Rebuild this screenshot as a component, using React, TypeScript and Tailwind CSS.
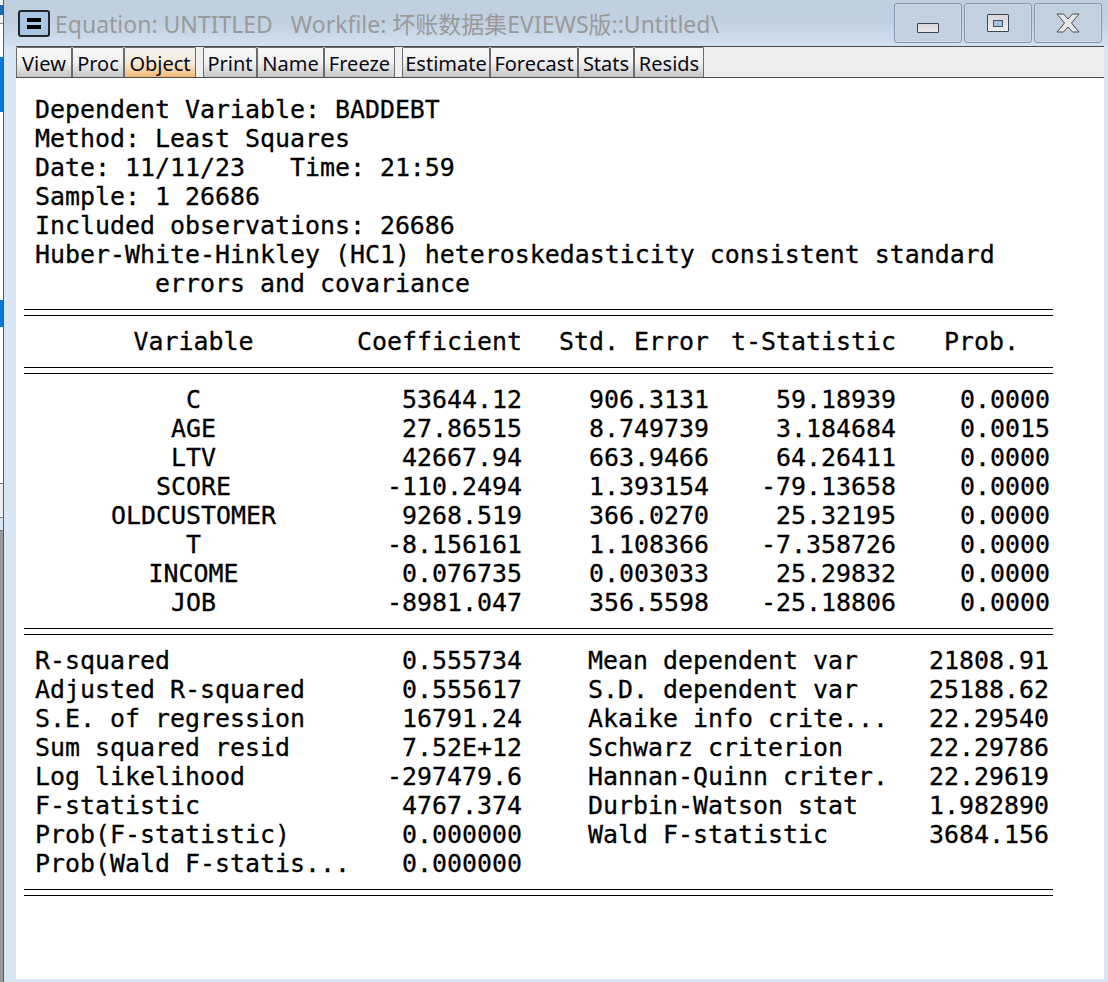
import React from 'react';

const coefRows = [
  ['C', '53644.12', '906.3131', '59.18939', '0.0000'],
  ['AGE', '27.86515', '8.749739', '3.184684', '0.0015'],
  ['LTV', '42667.94', '663.9466', '64.26411', '0.0000'],
  ['SCORE', '-110.2494', '1.393154', '-79.13658', '0.0000'],
  ['OLDCUSTOMER', '9268.519', '366.0270', '25.32195', '0.0000'],
  ['T', '-8.156161', '1.108366', '-7.358726', '0.0000'],
  ['INCOME', '0.076735', '0.003033', '25.29832', '0.0000'],
  ['JOB', '-8981.047', '356.5598', '-25.18806', '0.0000'],
];

const statRows = [
  ['R-squared', '0.555734', 'Mean dependent var', '21808.91'],
  ['Adjusted R-squared', '0.555617', 'S.D. dependent var', '25188.62'],
  ['S.E. of regression', '16791.24', 'Akaike info crite...', '22.29540'],
  ['Sum squared resid', '7.52E+12', 'Schwarz criterion', '22.29786'],
  ['Log likelihood', '-297479.6', 'Hannan-Quinn criter.', '22.29619'],
  ['F-statistic', '4767.374', 'Durbin-Watson stat', '1.982890'],
  ['Prob(F-statistic)', '0.000000', 'Wald F-statistic', '3684.156'],
  ['Prob(Wald F-statis...', '0.000000', '', ''],
];

const toolGroups = [
  [['View', 'w-[56px]'], ['Proc', 'w-[52px]'], ['Object', 'w-[72px]']],
  [['Print', 'w-[54px]'], ['Name', 'w-[67px]'], ['Freeze', 'w-[71px]']],
  [['Estimate', 'w-[88px]'], ['Forecast', 'w-[88px]'], ['Stats', 'w-[56px]'], ['Resids', 'w-[70px]']],
];

function DoubleRule() {
  return <div className="h-[7px] w-[1029px] border-y border-black" />;
}

function ToolButton({ label, width }: { label: string; width: string }) {
  const active = label === 'Object';
  return (
    <div
      className={`${width} flex h-[30px] items-center justify-center rounded-t-[2px] border border-[#6b6b6b] border-b-0 pt-[2px] font-['Noto_Sans',sans-serif] text-[20px] text-[#0a0a14] ${
        active
          ? 'bg-gradient-to-b from-[#f4f2ef] via-[#f6ead8] to-[#f3b873]'
          : 'bg-gradient-to-b from-[#f8f8f8] via-[#f1f1f1] to-[#c6c6c6]'
      }`}
    >
      {label}
    </div>
  );
}

function CaptionButton({ children }: { children: React.ReactNode }) {
  return (
    <div className="flex h-[40px] w-[68px] items-center justify-center rounded-[3px] border border-[#8496b3] bg-[#c2d0e0] shadow-[inset_0_0_0_1px_#cddaea]">
      {children}
    </div>
  );
}

// slice of whatever sits behind the window on the left edge
function BehindStrip() {
  return (
    <div className="flex w-[3px] shrink-0 flex-col bg-white">
      <div className="h-[23px] bg-[#f0f0f0] pt-[5px]">
        <div className="h-[10px] bg-[#1a6bb0]" />
      </div>
      <div className="h-px bg-[#8a8a8a]" />
      <div className="h-[33px]" />
      <div className="h-[55px] bg-[#0a78d7]" />
      <div className="h-[188px]" />
      <div className="h-[27px] bg-[#0a78d7]" />
      <div className="h-[156px]" />
      <div className="h-px bg-[#777777]" />
      <div className="h-[33px] bg-[#eeeeee]" />
      <div className="h-px bg-[#777777]" />
      <div className="h-[12px] bg-[#d5e6f3]" />
      <div className="h-px bg-[#777777]" />
      <div className="flex-1 bg-[#9a9a9a]" />
    </div>
  );
}

export default function App() {
  return (
    <div className="flex h-[982px] w-[1108px] overflow-hidden bg-[#d9e6f3] font-['Liberation_Sans','Noto_Sans_CJK_SC',sans-serif]">
      <BehindStrip />
      <div className="w-px shrink-0 bg-[#5a5a5a]" />
      <div className="flex min-w-0 flex-1 flex-col">
        <div className="flex h-[46px] items-start bg-gradient-to-b from-[#bfcfdf] via-[#c2d1e1] to-[#d3e1f0] pl-[14px] pr-[6px]">
          <div className="mt-[10px] flex h-[27px] w-[32px] shrink-0 flex-col items-center justify-center gap-[3px] rounded-[3px] border-2 border-[#23262c] bg-[#a9c5e4]">
            <div className="h-[4px] w-[14px] bg-black" />
            <div className="h-[4px] w-[14px] bg-black" />
          </div>
          <div className="ml-[5px] mt-[7px] flex-1 whitespace-pre font-['Noto_Sans','Noto_Sans_CJK_SC',sans-serif] text-[23px] leading-[34px] text-[#9a9a9a]">
            {'Equation: UNTITLED   Workfile: 坏账数据集EVIEWS版::Untitled\\'}
          </div>
          <div className="mt-[3px] flex gap-[2px]">
            <CaptionButton>
              <div className="mt-[9px] h-[10px] w-[22px] rounded-[1px] border border-[#40444c] bg-gradient-to-b from-[#d8d8d8] to-[#e6e6e6]" />
            </CaptionButton>
            <CaptionButton>
              <div className="flex h-[18px] w-[22px] items-center justify-center rounded-[1px] border border-[#40444c] bg-gradient-to-b from-[#d8d8d8] to-[#eeeeee]">
                <div className="h-[7px] w-[10px] border border-[#46516a] bg-[#a8bfdc]" />
              </div>
            </CaptionButton>
            <CaptionButton>
              <svg width="24" height="20" viewBox="0 0 24 20">
                <path
                  d="M1 1H7.5L12 6L16.5 1H23L15.5 10L23 19H16.5L12 14L7.5 19H1L8.5 10Z"
                  fill="#e6e6e6"
                  stroke="#4a4e57"
                  strokeWidth="1"
                  strokeLinejoin="round"
                />
              </svg>
            </CaptionButton>
          </div>
        </div>

        <div className="ml-[12px] mr-[4px] flex min-h-0 flex-1 flex-col">
          <div className="flex h-[32px] shrink-0 gap-[7px] border-y border-[#4c4c4c] bg-[#efefef]">
            {toolGroups.map((group, i) => (
              <div key={i} className="flex">
                {group.map(([label, width]) => (
                  <ToolButton key={label} label={label} width={width} />
                ))}
              </div>
            ))}
          </div>

          <div className="flex-1 whitespace-pre bg-white pl-[8px] pt-[17px] font-['DejaVu_Sans_Mono',monospace] text-[24.92px] leading-[29px] text-black [-webkit-text-stroke:0.3px_black]">
            <div className="pl-[11px]">
              <div>Dependent Variable: BADDEBT</div>
              <div>Method: Least Squares</div>
              <div>Date: 11/11/23   Time: 21:59</div>
              <div>Sample: 1 26686</div>
              <div>Included observations: 26686</div>
              <div>Huber-White-Hinkley (HC1) heteroskedasticity consistent standard</div>
              <div className="pl-[120px]">errors and covariance</div>
            </div>

            <div className="mt-[11px]"><DoubleRule /></div>
            <div className="mt-[11px] grid grid-cols-[339px_159px_187px_187px_154px]">
              <div className="text-center">Variable</div>
              <div className="justify-self-end">Coefficient</div>
              <div className="justify-self-end">Std. Error</div>
              <div className="justify-self-end">t-Statistic</div>
              <div className="justify-self-end pr-[31px]">Prob.</div>
            </div>
            <div className="mt-[11px]"><DoubleRule /></div>

            <div className="mt-[11px]">
              {coefRows.map((row) => (
                <div key={row[0]} className="grid grid-cols-[339px_159px_187px_187px_154px]">
                  <div className="text-center">{row[0]}</div>
                  <div className="text-right">{row[1]}</div>
                  <div className="text-right">{row[2]}</div>
                  <div className="text-right">{row[3]}</div>
                  <div className="text-right">{row[4]}</div>
                </div>
              ))}
            </div>
            <div className="mt-[11px]"><DoubleRule /></div>

            <div className="mt-[11px]">
              {statRows.map((row) => (
                <div key={row[0]} className="grid grid-cols-[319px_179px_66px_461px]">
                  <div className="pl-[11px]">{row[0]}</div>
                  <div className="text-right">{row[1]}</div>
                  <div className="col-start-4 flex justify-between">
                    <span>{row[2]}</span>
                    <span>{row[3]}</span>
                  </div>
                </div>
              ))}
            </div>
            <div className="mt-[11px]"><DoubleRule /></div>
          </div>
        </div>
        <div className="h-[3px] shrink-0" />
      </div>
    </div>
  );
}
